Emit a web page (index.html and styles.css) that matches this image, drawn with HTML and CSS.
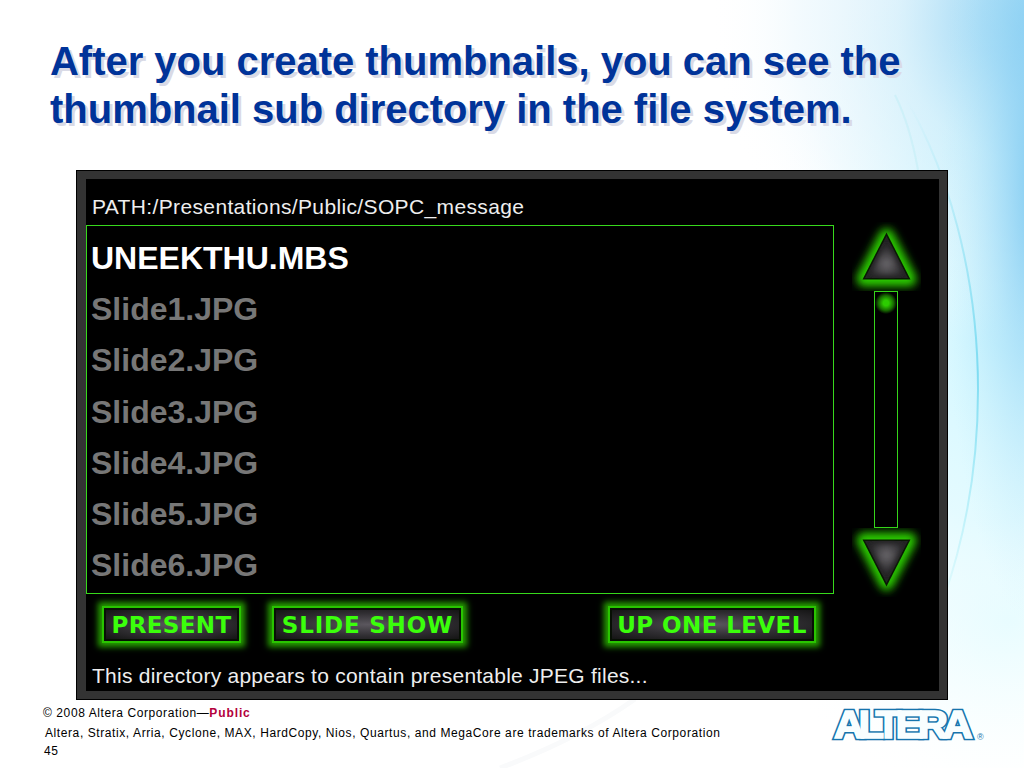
FILE: index.html
```html
<!DOCTYPE html>
<html lang="en">
<head>
<meta charset="utf-8">
<title>Thumbnail directory</title>
<link rel="stylesheet" href="styles.css">
</head>
<body>
<main class="slide">
  <svg class="backdrop" viewBox="0 0 1024 768" aria-hidden="true">
    <defs>
      <radialGradient id="cyan" gradientUnits="userSpaceOnUse" cx="0" cy="0" r="1" gradientTransform="translate(990 330) scale(230 430)">
        <stop offset="0" stop-color="#cff6ff"/><stop offset=".45" stop-color="#e0faff" stop-opacity=".85"/><stop offset="1" stop-color="#fff" stop-opacity="0"/>
      </radialGradient>
      <radialGradient id="sky" gradientUnits="userSpaceOnUse" cx="0" cy="0" r="1" gradientTransform="translate(1050 20) scale(340 330)">
        <stop offset="0" stop-color="#79c6ef"/><stop offset=".2" stop-color="#90d1f3" stop-opacity=".8"/><stop offset=".45" stop-color="#bbe5f8" stop-opacity=".5"/><stop offset=".75" stop-color="#dff3fc" stop-opacity=".35"/><stop offset="1" stop-color="#fff" stop-opacity="0"/>
      </radialGradient>
      <radialGradient id="edge" gradientUnits="userSpaceOnUse" cx="0" cy="0" r="1" gradientTransform="translate(1040 190) scale(100 440)">
        <stop offset="0" stop-color="#7cc8f0"/><stop offset=".4" stop-color="#94d5f5" stop-opacity=".6"/><stop offset="1" stop-color="#c5eefb" stop-opacity="0"/>
      </radialGradient>
      <radialGradient id="low" gradientUnits="userSpaceOnUse" cx="0" cy="0" r="1" gradientTransform="translate(1010 620) scale(240 190)">
        <stop offset="0" stop-color="#e3fcff"/><stop offset="1" stop-color="#fff" stop-opacity="0"/>
      </radialGradient>
      <linearGradient id="arc" gradientUnits="userSpaceOnUse" x1="0" y1="100" x2="0" y2="640">
        <stop offset="0" stop-color="#8fe3f2" stop-opacity="0"/><stop offset=".5" stop-color="#7edcf2"/><stop offset="1" stop-color="#a5eff5" stop-opacity="0"/>
      </linearGradient>
    </defs>
    <rect width="1024" height="768" fill="#fff"/>
    <rect width="1024" height="768" fill="url(#low)"/>
    <rect width="1024" height="768" fill="url(#cyan)"/>
    <rect width="1024" height="768" fill="url(#sky)"/>
    <rect width="1024" height="768" fill="url(#edge)"/>
    <path d="M680 -57A298 447 0 0 1 680 837" fill="none" stroke="url(#arc)" stroke-width="2"/>
    <path d="M895 95Q910 125 918 170" fill="none" stroke="#a5e6f0" stroke-opacity=".25" stroke-width="2"/>
    <path d="M500 768Q580 738 635 699" fill="none" stroke="#f9fafb" stroke-width="5"/>
  </svg>

  <h1 class="title">After you create thumbnails, you can see the<br>thumbnail sub directory in the file system.</h1>

  <section class="device">
    <div class="browser">
      <p class="path">PATH:/Presentations/Public/SOPC_message</p>
      <ul class="files">
        <li class="selected">UNEEKTHU.MBS</li>
        <li>Slide1.JPG</li>
        <li>Slide2.JPG</li>
        <li>Slide3.JPG</li>
        <li>Slide4.JPG</li>
        <li>Slide5.JPG</li>
        <li>Slide6.JPG</li>
      </ul>
      <div class="actions">
        <div class="button present"><span>PRESENT</span></div>
        <div class="button show"><span>SLIDE SHOW</span></div>
        <div class="button up"><span>UP ONE LEVEL</span></div>
      </div>
      <p class="status">This directory appears to contain presentable JPEG files...</p>
    </div>
    <div class="scroller">
      <svg class="arrow" viewBox="0 0 69 69">
        <defs>
          <filter id="glow" filterUnits="userSpaceOnUse" x="-20" y="-20" width="109" height="109"><feGaussianBlur stdDeviation="4.5"/></filter>
          <filter id="soft" x="-20%" y="-20%" width="140%" height="140%"><feGaussianBlur stdDeviation="2"/></filter>
          <radialGradient id="metal" gradientUnits="userSpaceOnUse" cx="34.500" cy="42" r="23">
            <stop offset="0" stop-color="#68666a"/><stop offset=".55" stop-color="#3a383b"/><stop offset="1" stop-color="#151515"/>
          </radialGradient>
          <g id="tri">
            <path d="M34.500 14L57 57H12Z" fill="#2bcc00" stroke="#2bcc00" stroke-width="15" stroke-linejoin="round" filter="url(#glow)"/>
            <path d="M34.500 10.500L58.500 57.500H10.500Z" fill="#091804"/>
            <path d="M34.500 14L56 56H13Z" fill="#242325"/>
            <path d="M34.500 20L51 53H18Z" fill="url(#metal)" filter="url(#soft)"/>
          </g>
        </defs>
        <use href="#tri"/>
      </svg>
      <div class="track"><div class="thumb"></div></div>
      <svg class="arrow" viewBox="0 0 69 69"><use href="#tri" transform="matrix(1 0 0 -1 0 69)"/></svg>
    </div>
  </section>

  <footer class="footer">
    <div class="legal">
      <p class="copyright">© 2008 Altera Corporation—<b>Public</b></p>
      <p class="marks">Altera, Stratix, Arria, Cyclone, MAX, HardCopy, Nios, Quartus, and MegaCore are trademarks of Altera Corporation</p>
      <p class="page">45</p>
    </div>
    <svg class="logo" viewBox="0 0 160 52">
      <g class="logo-text" transform="translate(4 34.500) scale(1.1 1)">
        <text class="logo-line" textLength="126" lengthAdjust="spacing">ALTERA</text>
        <text class="logo-fill" textLength="126" lengthAdjust="spacing">ALTERA</text>
      </g>
      <text class="logo-mark" x="147" y="36.500">®</text>
    </svg>
  </footer>
</main>
</body>
</html>
```
FILE: styles.css
```css
* { box-sizing: border-box; }
body, h1, p, ul { margin: 0; padding: 0; }
body { background: #fff; font-family: "Liberation Sans", Arial, sans-serif; }
.slide {
  position: relative;
  width: 1024px;
  height: 768px;
  overflow: hidden;
  display: flex;
  flex-direction: column;
}
.backdrop { position: absolute; inset: 0; width: 1024px; height: 768px; z-index: -1; }
.title {
  height: 170px;
  padding: 37px 0 0 50px;
  font-size: 40px;
  line-height: 48px;
  font-weight: 700;
  letter-spacing: -0.02px;
  color: #003399;
  white-space: nowrap;
  text-shadow: 3px 3px 0 #d9dae6;
}
.device {
  width: 872px;
  height: 530px;
  margin-left: 76px;
  border: 1px solid #000;
  background: #000;
  box-shadow: inset 9px 8px 0 #333, inset -8px -8px 0 #333;
  padding: 8px 9px;
  display: flex;
  flex: none;
}
.browser { width: 748px; color: #eee; }
.path { height: 46px; padding: 16px 0 0 6px; font-size: 21px; line-height: 24px; letter-spacing: 0.36px; white-space: nowrap; }
.files {
  list-style: none;
  height: 369px;
  border: 1px solid #37d91c;
  padding: 7px 0 0 4px;
  font-size: 32px;
  line-height: 51.2px;
  font-weight: 700;
  color: #777;
}
.files li { height: 51.2px; }
.files .selected { color: #fff; }
.actions { display: flex; height: 64px; padding: 14px 0 0 18px; }
.button {
  height: 33px;
  border: 2px solid #071004;
  background: radial-gradient(ellipse at center, #5b575e 0, #302e32 55%, #151515 100%);
  box-shadow: 0 0 0 2px #29c400, 0 0 6px 6px #259f00;
  color: #3bff0b;
  font: 700 23px/30px "DejaVu Sans", sans-serif;
  display: flex;
  justify-content: center;
  white-space: nowrap;
}
.present { width: 135px; letter-spacing: 0.35px; }
.show { width: 187px; margin-left: 35px; letter-spacing: 0.8px; }
.up { width: 204px; margin-left: 149px; letter-spacing: 0.4px; }
.status { padding: 6px 0 0 6px; font-size: 21px; line-height: 24px; letter-spacing: 0.24px; white-space: nowrap; }
.scroller { width: 69px; margin: 43px 0 0 18px; }
.arrow { display: block; width: 69px; height: 69px; overflow: hidden; }
.track { width: 24px; height: 237px; margin-left: 22px; border: 1px solid #35d51a; }
.thumb { height: 22px; background: radial-gradient(circle closest-side, #2ccc00 0 25%, #176b00 68%, #000 100%); }
.footer { display: flex; flex: 1; font-size: 12px; line-height: 15px; color: #000; }
.legal { width: 789px; padding: 6px 0 0 43px; letter-spacing: 0.59px; white-space: nowrap; }
.copyright b { color: #b3003c; letter-spacing: 0.9px; }
.marks { padding: 5px 0 0 2px; }
.page { padding: 3px 0 0 1px; }
.logo { width: 160px; height: 52px; margin: 3px 0 0 41px; overflow: visible; }
.logo-text { font: 700 38px "Liberation Sans", sans-serif; }
.logo-line { fill: #1674ad; stroke: #1674ad; stroke-width: 4.6px; stroke-miterlimit: 2; }
.logo-fill { fill: #f8feff; stroke: #f8feff; stroke-width: 1.6px; stroke-miterlimit: 2; }
.logo-mark { font: 9px "Liberation Sans", sans-serif; fill: #1674ad; }
```
